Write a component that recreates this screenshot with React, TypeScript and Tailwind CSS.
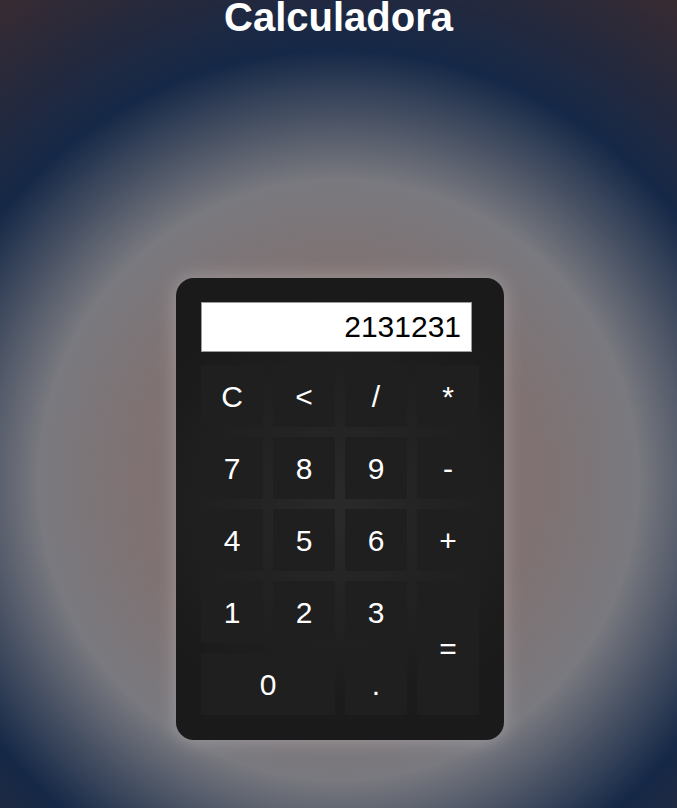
import React, { useState } from 'react';

const keys: { label: string; cls?: string }[] = [
  { label: 'C' },
  { label: '<' },
  { label: '/' },
  { label: '*' },
  { label: '7' },
  { label: '8' },
  { label: '9' },
  { label: '-' },
  { label: '4' },
  { label: '5' },
  { label: '6' },
  { label: '+' },
  { label: '1' },
  { label: '2' },
  { label: '3' },
  { label: '=', cls: 'row-span-2 col-start-4 row-start-4' },
  { label: '0', cls: 'col-span-2' },
  { label: '.' },
];

const App = () => {
  const [value] = useState('2131231');

  return (
    <div
      className="min-h-[808px] flex flex-col items-center bg-[radial-gradient(circle_at_50%_480px,#7a6e6e_0px,#807272_200px,#79797f_300px,#152847_430px,#3d2b2e_610px)]"
      style={{ fontFamily: '"Liberation Sans", Arial, sans-serif' }}
    >
      <h1 className="text-[40px] leading-[40px] font-bold text-white -mt-[3px]">Calculadora</h1>

      {/* calculadora */}
      <div className="mt-[241px] ml-[3px] w-[328px] pt-[24px] px-[25px] pb-[25px] rounded-[18px] bg-[radial-gradient(circle_at_50%_50%,#2a2a2a_0%,#1b1a1a_75%)] shadow-[0_0_20px_rgba(255,255,255,0.28)]">
        <input
          readOnly
          value={value}
          className="block w-[271px] h-[50px] mb-[13px] bg-white border border-[#9a9a9a] text-right text-[30px] text-black pr-[10px] outline-none"
          style={{ fontFamily: '"Liberation Sans", Arial, sans-serif' }}
        />
        <div className="grid grid-cols-[repeat(4,62px)] auto-rows-[62px] gap-[10px]">
          {keys.map((k) => (
            <button
              key={k.label}
              className={`bg-[#1f1f1f] text-white text-[30px] flex items-center justify-center ${k.cls ?? ''}`}
              style={{ fontFamily: '"Liberation Sans", Arial, sans-serif' }}
            >
              {k.label}
            </button>
          ))}
        </div>
      </div>
    </div>
  );
};

export default App;
